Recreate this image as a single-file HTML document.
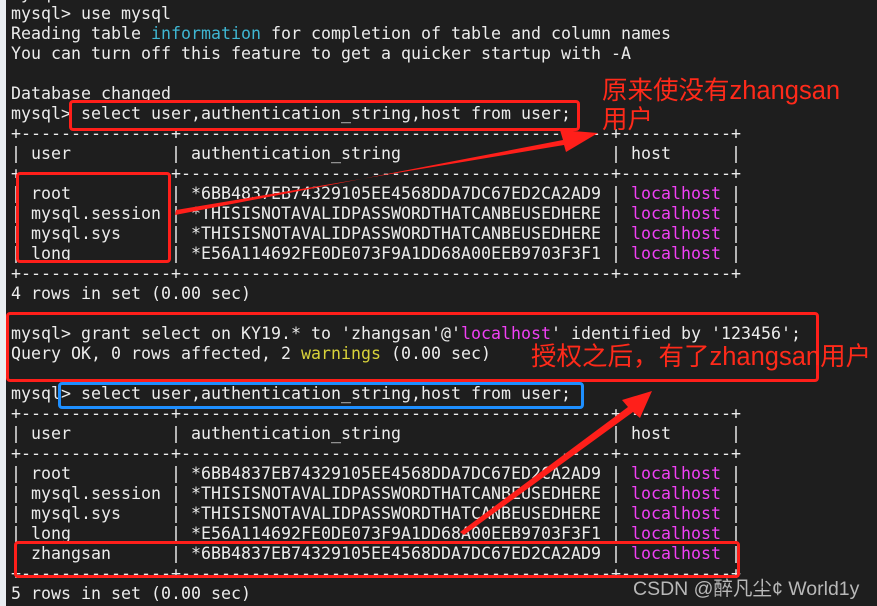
<!DOCTYPE html>
<html><head><meta charset="utf-8"><style>
html,body{margin:0;padding:0}
body{width:877px;height:606px;overflow:hidden;background:#1e1e1e;position:relative}
.strip{position:absolute;left:0;top:0;width:6px;height:606px;background:#e9edf1}
pre{position:absolute;left:11px;top:-16px;margin:0;font-family:"DejaVu Sans Mono","Liberation Mono",monospace;font-size:16.61px;line-height:20px;color:#ececec;white-space:pre}
.c{color:#3fb6d2}.m{color:#f040f4}.y{color:#d8d23a}
.box{position:absolute;border:3px solid #ff1f1a;border-radius:4px;box-sizing:border-box}
.ann{position:absolute;color:#ff2a1a;font-family:"Liberation Sans","Noto Sans CJK SC",sans-serif;font-size:25.5px;line-height:30px;white-space:nowrap}
.wm{position:absolute;left:633px;top:572px;color:#b8b8b8;font-family:"Liberation Sans","Noto Sans CJK SC",sans-serif;font-size:19.5px;white-space:nowrap}
</style></head><body>
<div class="strip"></div>
<pre>mysql> use KY19
mysql> use mysql
Reading table <span class="c">information</span> for completion of table and column names
You can turn off this feature to get a quicker startup with -A

Database changed
mysql> select user,authentication_string,host from user;
+---------------+-------------------------------------------+-----------+
| user          | authentication_string                     | host      |
+---------------+-------------------------------------------+-----------+
| root          | *6BB4837EB74329105EE4568DDA7DC67ED2CA2AD9 | <span class="m">localhost</span> |
| mysql.session | *THISISNOTAVALIDPASSWORDTHATCANBEUSEDHERE | <span class="m">localhost</span> |
| mysql.sys     | *THISISNOTAVALIDPASSWORDTHATCANBEUSEDHERE | <span class="m">localhost</span> |
| long          | *E56A114692FE0DE073F9A1DD68A00EEB9703F3F1 | <span class="m">localhost</span> |
+---------------+-------------------------------------------+-----------+
4 rows in set (0.00 sec)

mysql> grant select on KY19.* to 'zhangsan'@'<span class="m">localhost</span>' identified by '123456';
Query OK, 0 rows affected, 2 <span class="y">warnings</span> (0.00 sec)

mysql> select user,authentication_string,host from user;
+---------------+-------------------------------------------+-----------+
| user          | authentication_string                     | host      |
+---------------+-------------------------------------------+-----------+
| root          | *6BB4837EB74329105EE4568DDA7DC67ED2CA2AD9 | <span class="m">localhost</span> |
| mysql.session | *THISISNOTAVALIDPASSWORDTHATCANBEUSEDHERE | <span class="m">localhost</span> |
| mysql.sys     | *THISISNOTAVALIDPASSWORDTHATCANBEUSEDHERE | <span class="m">localhost</span> |
| long          | *E56A114692FE0DE073F9A1DD68A00EEB9703F3F1 | <span class="m">localhost</span> |
| zhangsan      | *6BB4837EB74329105EE4568DDA7DC67ED2CA2AD9 | <span class="m">localhost</span> |
+---------------+-------------------------------------------+-----------+
5 rows in set (0.00 sec)</pre>
<div class="box" style="left:69px;top:100px;width:511px;height:31px"></div>
<div class="box" style="left:16px;top:172px;width:155px;height:91px"></div>
<div class="box" style="left:6px;top:312px;width:813px;height:70px"></div>
<div class="box" style="left:58px;top:382px;width:526px;height:27px;border-color:#1e8fff"></div>
<div class="box" style="left:14px;top:541px;width:726px;height:37px"></div>
<svg style="position:absolute;left:0;top:0" width="877" height="606">
<polygon points="175,215 563,140 560,130 598,133 566,152 564,145 176,210" fill="#ff1f1a"/>
<polygon points="460,532 628,407 622,400 652,391 640,418 633,412 464,535" fill="#ff1f1a"/>
</svg>
<div class="ann" style="left:602px;top:76px">原来使没有zhangsan</div>
<div class="ann" style="left:602px;top:105px">用户</div>
<div class="ann" style="left:531px;top:342px">授权之后，有了zhangsan用户</div>
<div class="wm">CSDN @醉凡尘¢ World1y</div>
</body></html>
